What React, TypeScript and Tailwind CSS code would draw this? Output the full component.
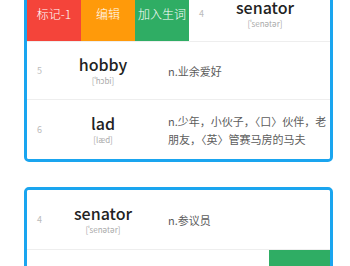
import React from "react";

type Word = {
  id: number;
  word: string;
  phonetic: string;
  meaning: string;
};

const topWords: Word[] = [
  { id: 4, word: "senator", phonetic: "[ˈsenətər]", meaning: "n.参议员" },
  { id: 5, word: "hobby", phonetic: "[ˈhɔbi]", meaning: "n.业余爱好" },
  {
    id: 6,
    word: "lad",
    phonetic: "[læd]",
    meaning: "n.少年，小伙子，〈口〉伙伴，老朋友，〈英〉管赛马房的马夫",
  },
];

const font = {
  fontFamily: '"Noto Sans CJK SC", "Noto Sans", sans-serif',
};

const WordRow = ({ item }: { item: Word }) => (
  <div className="flex items-center w-[303px] shrink-0 h-full bg-white">
    <div className="w-[24px] pl-[10px] text-[9px] text-[#bbbbbb]">{item.id}</div>
    <div className="w-[104px] flex flex-col items-center">
      <span className="text-[16px] leading-[18px] font-medium text-[#222222]">
        {item.word}
      </span>
      <span className="mt-[2px] text-[8px] leading-[11px] text-[#aaaaaa]">
        {item.phonetic}
      </span>
    </div>
    <div className="flex-1 pl-[13px] pr-0 text-[11px] leading-[18px] text-[#5c5c5c]">
      {item.meaning}
    </div>
  </div>
);

const App = () => {
  return (
    <div className="w-[350px] h-[266px] overflow-hidden bg-white" style={font}>
      <div className="-mt-[17px] ml-[24px] w-[309px] border-[3px] border-[#1aa5ef] rounded-[5px] overflow-hidden">
        {/* swiped row */}
        <div className="flex h-[56px] border-b border-[#eeeeee] overflow-hidden">
          <div className="w-[54px] shrink-0 bg-[#f4443a] flex items-center justify-center text-white text-[12px] font-light">
            标记-1
          </div>
          <div className="w-[54px] shrink-0 bg-[#ff9a0a] flex items-center justify-center text-white text-[12px] font-light">
            编辑
          </div>
          <div className="w-[54px] shrink-0 bg-[#2fad64] flex items-center justify-center text-white text-[12px] font-light">
            加入生词
          </div>
          <WordRow item={topWords[0]} />
        </div>
        <div className="h-[58px] border-b border-[#eeeeee]">
          <WordRow item={topWords[1]} />
        </div>
        <div className="h-[59px]">
          <WordRow item={topWords[2]} />
        </div>
      </div>

      <div className="mt-[25px] ml-[24px] w-[309px] border-[3px] border-[#1aa5ef] rounded-[5px] overflow-hidden">
        <div className="h-[60px] border-b border-[#eeeeee]">
          <WordRow item={topWords[0]} />
        </div>
        <div className="flex h-[40px]">
          <div className="flex-1 bg-white" />
          <div className="w-[61px] bg-[#2fad64]" />
        </div>
      </div>
    </div>
  );
};

export default App;
